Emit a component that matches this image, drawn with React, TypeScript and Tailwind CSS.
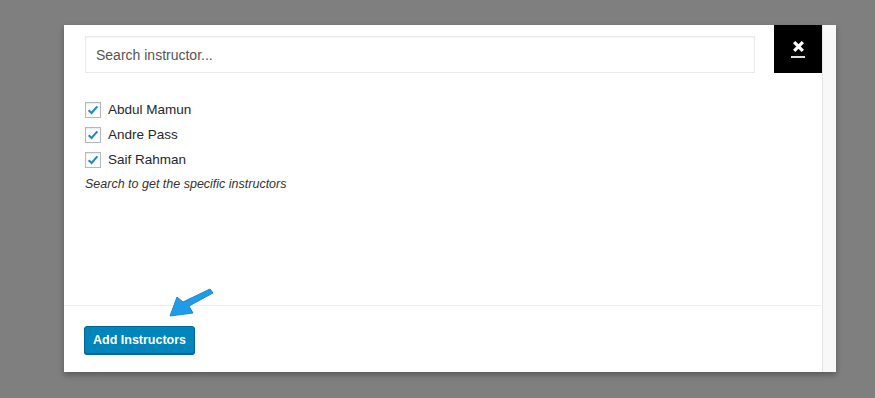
import React from "react";

const instructors = ["Abdul Mamun", "Andre Pass", "Saif Rahman"];

function CheckBox() {
  return (
    <span className="flex h-4 w-4 items-center justify-center border border-[#b4b9be] bg-white shadow-[inset_0_1px_2px_rgba(0,0,0,0.1)]">
      <svg viewBox="0 0 16 16" className="h-[14px] w-[14px]">
        <path d="M3 8.2 L6.4 11.4 L13 3.8" fill="none" stroke="#1e8cbe" strokeWidth="2.4" />
      </svg>
    </span>
  );
}

export default function App() {
  return (
    <div className="relative h-[398px] w-[875px] overflow-hidden bg-[#7f7f7f] pl-[64px] pt-[25px] font-['Liberation_Sans',Arial,sans-serif]">
      {/* Modal */}
      <div className="flex h-[347px] w-[772px] shadow-[0_3px_6px_rgba(0,0,0,0.3)]">
        <div className="relative flex w-[758px] flex-col bg-white">
          {/* Close */}
          <button className="absolute right-0 top-0 flex h-[48px] w-[48px] flex-col items-center justify-center bg-black text-white">
            <svg viewBox="0 0 12 12" className="h-[13px] w-[13px]">
              <path d="M2 2 L10 10 M10 2 L2 10" stroke="white" strokeWidth="3" />
            </svg>
            <span className="mt-[3px] h-[2px] w-[14px] bg-[#ddd]" />
          </button>

          <div className="flex-1 pl-[21px] pt-[11px]">
            <input
              type="text"
              placeholder="Search instructor..."
              className="h-[37px] w-[670px] border border-[#eaeaea] px-[10px] text-[14px] text-[#32373c] placeholder-[#555] shadow-[inset_0_1px_2px_rgba(0,0,0,0.04)] outline-none"
            />
            <div className="mt-[29px] flex flex-col gap-[9px]">
              {instructors.map((name) => (
                <label key={name} className="flex items-center gap-[7px] text-[13.5px] leading-4 text-[#23282d]">
                  <CheckBox />
                  {name}
                </label>
              ))}
            </div>
            <p className="mt-[7px] text-[12.5px] italic text-[#333]">Search to get the specific instructors</p>
          </div>

          {/* Footer */}
          <div className="h-[67px] border-t border-[#ededed] pl-[20px] pt-[20px]">
            <button className="h-[28px] rounded-[3px] border border-[#006799] bg-[#0085ba] px-[8px] text-[12.5px] font-semibold text-white shadow-[0_1px_0_#006799]">
              Add Instructors
            </button>
          </div>

          {/* Arrow annotation */}
          <svg viewBox="0 0 60 40" className="absolute left-[96px] top-[260px] h-[40px] w-[60px]">
            <path
              d="M50 4 L53 8 L29 21 L33 28 L10 31 L17 12 L23 17 Z"
              fill="#1f9be8"
              stroke="#1b8ad6"
              strokeWidth="1"
              strokeLinejoin="round"
            />
          </svg>
        </div>
        <div className="w-[14px] border-l border-[#e5e5e5] bg-[#f8f8f8]" />
      </div>
    </div>
  );
}
